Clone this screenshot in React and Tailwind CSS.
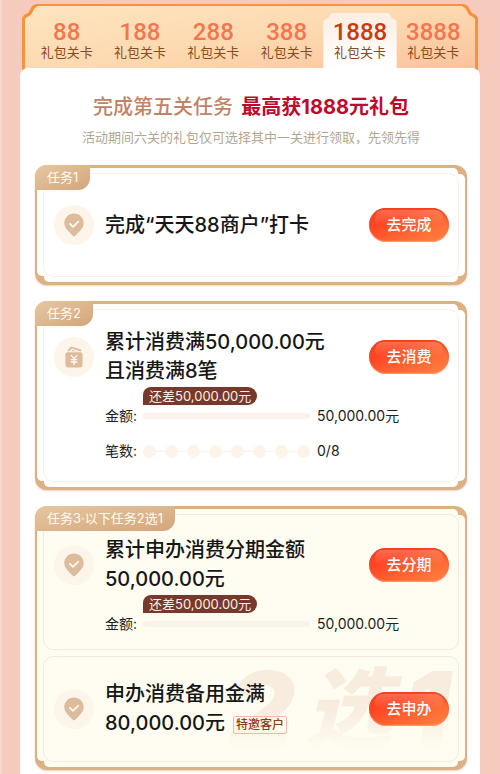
import { useState } from "react";
import clsx from "clsx";

const LEVELS = ["88", "188", "288", "388", "1888", "3888"];

function PinIcon() {
  return (
    <svg viewBox="0 0 20 24" className="w-5 h-6" aria-hidden="true">
      <path
        d="M10 0.5C4.6 0.5 0.3 4.7 0.3 10c0 3.6 1.9 6 4.3 8.4l4.2 4.4c.7.7 1.7.7 2.4 0l4.2-4.4c2.4-2.4 4.3-4.8 4.3-8.4C19.7 4.7 15.4.5 10 .5z"
        fill="#dcbc9d"
      />
      <path
        d="M6 10.8l3 3 5.2-5.2"
        fill="none"
        stroke="#fff8ee"
        strokeWidth="1.8"
        strokeLinecap="round"
        strokeLinejoin="round"
      />
    </svg>
  );
}

function WalletIcon() {
  return (
    <svg viewBox="0 0 20 24" className="w-5 h-6" aria-hidden="true">
      <path d="M3 6.2L6.2 2.2c.5-.6 1.1-.7 1.8-.5l8.2 2.6c.8.3 1.1.9 1.1 1.9h-1.5L8 3.5 5.2 6.2z" fill="#dcbc9d" />
      <path d="M7 6.2l1.4-1.2 4.2 1.2z" fill="#dcbc9d" />
      <rect x="1.4" y="7.2" width="17.2" height="15.2" rx="2.4" fill="#dcbc9d" />
      <path
        d="M7.2 10.4L10 13.6l2.8-3.2M10 13.6v6M7.2 14.6h5.6M7.2 17h5.6"
        fill="none"
        stroke="#fff8ee"
        strokeWidth="1.3"
        strokeLinecap="round"
      />
    </svg>
  );
}

function LevelTabs({ current, onChange }) {
  return (
    <div className="mx-[2px] -mb-2 bg-[#f9923a] pt-[2px] px-[3px] [clip-path:polygon(0_100%,0_14px,2px_11px,6px_9px,8px_6px,10px_2px,14px_0,calc(100%-14px)_0,calc(100%-10px)_2px,calc(100%-8px)_6px,calc(100%-6px)_9px,calc(100%-2px)_11px,100%_14px,100%_100%)]">
      <div className="flex px-[5px] pt-[7px] pb-2 bg-linear-to-br from-[#fde5c0] via-[#fdd9b0] to-[#f9c09a] [clip-path:polygon(0_100%,0_13px,2px_11px,6px_9px,8px_5px,10px_2px,13px_0,calc(100%-13px)_0,calc(100%-10px)_2px,calc(100%-8px)_5px,calc(100%-6px)_9px,calc(100%-2px)_11px,100%_13px,100%_100%)]">
        {LEVELS.map((level) => {
          const active = level === current;
          return (
            <button
              key={level}
              type="button"
              aria-pressed={active}
              onClick={() => onChange(level)}
              className={clsx(
                "flex-1 h-[55px] pt-[7px] flex flex-col items-center cursor-pointer",
                active &&
                  "bg-linear-to-b from-[#fdeee2] to-white [clip-path:polygon(0_100%,0_8px,5px_5px,8px_0,calc(100%-8px)_0,calc(100%-5px)_5px,100%_8px,100%_100%)]"
              )}
            >
              <span
                className={clsx(
                  "font-['Roboto',sans-serif] text-2xl leading-6 font-medium",
                  active ? "text-[#c93a0c]" : "text-[#f5764e]"
                )}
              >
                {level}
              </span>
              <span className="text-[13px] leading-4 text-[#8a4a20]">礼包关卡</span>
            </button>
          );
        })}
      </div>
    </div>
  );
}

function Card({ label, cream, children }) {
  const fill = cream ? "bg-[#fffdf1]" : "bg-white";
  return (
    <section className="relative rounded-xl bg-[#dcb284] p-2 shadow-[0_1px_2px_#ecd0c4]">
      {/* two crossed panels leave the stepped gold corners */}
      <span className={clsx("absolute inset-x-[2px] inset-y-[9px] rounded-[5px]", fill)} />
      <span className={clsx("absolute inset-x-[9px] inset-y-[3px] rounded-[5px]", fill)} />
      <h2 className="absolute left-0 top-0 z-10 h-[25px] px-3 rounded-tl-xl rounded-br-xl bg-linear-to-br from-[#e6c7a1] to-[#d4a67b] text-[13px] leading-6 text-[#fffaf0]">
        {label}
      </h2>
      <div className="relative flex flex-col gap-[6px]">{children}</div>
    </section>
  );
}

function Task({ icon, title, action, cream, className, watermark, children }) {
  return (
    <article
      className={clsx(
        "relative rounded-[10px] border pl-[10px] pr-[9px]",
        cream ? "border-[#f5ebdd]" : "border-[#faf1e3]",
        className
      )}
    >
      {watermark && (
        <div
          aria-hidden="true"
          className="absolute right-0 top-0 h-full pr-2 flex items-center gap-[10px] font-black italic text-transparent bg-clip-text bg-linear-to-b from-[#f8ecdf] from-50% to-[#fffdf1] to-90%"
        >
          <span className="text-[104px] leading-[100px]">2</span>
          <span className="text-[88px] leading-[100px]">选</span>
          <span className="text-[104px] leading-[100px]">1</span>
        </div>
      )}
      <div className="relative flex items-center min-h-[58px]">
        <span className="size-10 shrink-0 rounded-full bg-[#fdf5ea] flex items-center justify-center">
          {icon}
        </span>
        <h3 className="flex-1 ml-[11px] text-xl leading-[29px] font-medium text-[#161616]">
          {title}
        </h3>
        <button
          type="button"
          className="relative shrink-0 w-20 h-[34px] rounded-full bg-linear-to-br from-[#ff4523] from-30% to-[#ff8442] text-[15px] font-medium text-white cursor-pointer shadow-[inset_0_1px_2px_#e8401c,inset_0_-1px_1px_#ffa27c]"
        >
          <span className="absolute inset-x-[6px] top-[2px] h-4 rounded-full bg-linear-to-b from-white/20 to-white/0" />
          <span className="relative">{action}</span>
        </button>
      </div>
      {children && (
        <div className="relative ml-[51px] mt-px text-sm leading-[22px] text-[#222]">{children}</div>
      )}
    </article>
  );
}

function AmountProgress() {
  return (
    <>
      <div className="ml-[38px] w-fit h-[18px] px-[6px] rounded-tl-lg rounded-r-[9px] bg-[#77392c] text-[13px] leading-[18px] text-[#fdeee6]">
        还差50,000.00元
      </div>
      <div className="flex items-center">
        <span className="w-[38px] shrink-0">金额:</span>
        <span className="flex-1 h-[6px] rounded-full bg-[#fbf3e9]" />
        <span className="w-[132px] shrink-0 ml-[7px]">50,000.00元</span>
      </div>
    </>
  );
}

function CountProgress() {
  return (
    <div className="flex items-center mt-[13px]">
      <span className="w-[38px] shrink-0">笔数:</span>
      <span className="relative flex-1 flex justify-between">
        <span className="absolute inset-x-0 top-[6px] h-px bg-[#fbf3e9]" />
        {Array.from({ length: 8 }, (_, i) => (
          <span key={i} className="relative size-[13px] rounded-full bg-[#fcf4e9]" />
        ))}
      </span>
      <span className="w-[132px] shrink-0 ml-[7px]">0/8</span>
    </div>
  );
}

export default function App() {
  const [level, setLevel] = useState("1888");

  return (
    <div className="min-h-screen flex flex-col bg-[#f6cbbd] border-l-2 border-[#fad7cc] pl-[18px] pr-5 pt-1 font-['Inter','Noto_Sans_CJK_SC',sans-serif]">
      <LevelTabs current={level} onChange={setLevel} />

      <main className="relative flex-1 bg-white rounded-t-lg pl-[15px] pr-[13px] pt-[25px] pb-1">
        <h1 className="text-center text-xl leading-7 font-medium text-[#bf8468]">
          完成第五关任务 <strong className="ml-[3px] font-bold text-[#bd0a2c]">最高获1888元礼包</strong>
        </h1>
        <p className="mt-[6px] text-center text-[13px] leading-5 text-[#b3a692]">
          活动期间六关的礼包仅可选择其中一关进行领取，先领先得
        </p>

        <div className="mt-[18px] flex flex-col gap-4">
          <Card label="任务1">
            <Task icon={<PinIcon />} title="完成“天天88商户”打卡" action="去完成" className="py-[22px]" />
          </Card>

          <Card label="任务2">
            <Task
              icon={<WalletIcon />}
              title={<>累计消费满50,000.00元<br />且消费满8笔</>}
              action="去消费"
              className="pt-[18px] pb-[19px]"
            >
              <AmountProgress />
              <CountProgress />
            </Task>
          </Card>

          <Card label="任务3·以下任务2选1" cream>
            <Task
              icon={<PinIcon />}
              title={<>累计申办消费分期金额<br />50,000.00元</>}
              action="去分期"
              cream
              className="pt-[21px] pb-[14px]"
            >
              <AmountProgress />
            </Task>
            <Task
              icon={<PinIcon />}
              title={
                <>
                  申办消费备用金满<br />80,000.00元
                  <span className="inline-block align-middle ml-2 px-[2px] border border-[#f3b9a8] rounded-[2px] text-xs leading-4 text-[#8c3a22]">
                    特邀客户
                  </span>
                </>
              }
              action="去申办"
              cream
              watermark
              className="py-[23px]"
            />
          </Card>
        </div>
      </main>
    </div>
  );
}
